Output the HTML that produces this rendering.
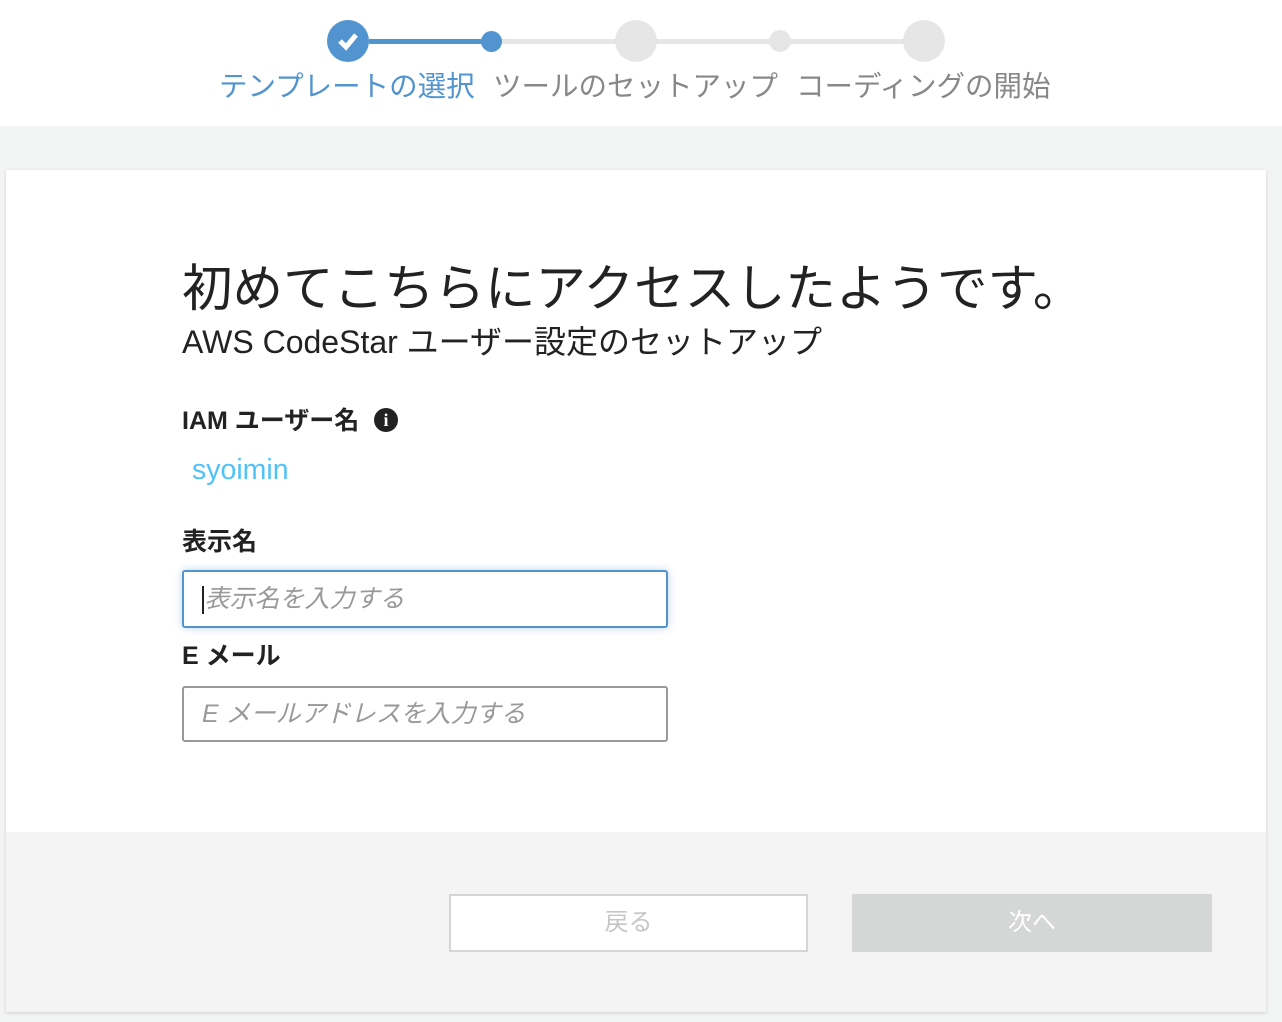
<!DOCTYPE html>
<html><head><meta charset="utf-8"><style>
*{margin:0;padding:0;box-sizing:border-box}
body{width:1282px;height:1022px;background:#f2f3f3;font-family:"Liberation Sans","Noto Sans CJK JP",sans-serif;position:relative;overflow:hidden;color:#222}
.a{position:absolute;white-space:nowrap}
.top{position:absolute;left:0;top:0;width:1282px;height:126px;background:#fff}
.c{position:absolute;border-radius:50%}
.card{position:absolute;left:6px;top:170px;width:1260px;height:842px;background:#fff;box-shadow:0 1px 3px rgba(0,0,0,.15)}
.foot{position:absolute;left:6px;top:832px;width:1260px;height:180px;background:#f4f4f4}
.inp{position:absolute;left:182px;width:486px;border-radius:3px;background:#fff;font-style:italic;color:#999;font-size:25px;padding-left:18px}
</style></head><body>
<div class="top"></div>
<div class="a" style="left:369px;top:39px;width:122px;height:5px;background:#5294cf"></div>
<div class="a" style="left:491px;top:39px;width:433px;height:5px;background:#e6e6e6"></div>
<div class="c" style="left:327px;top:20px;width:42px;height:42px;background:#5294cf"></div>
<svg class="a" style="left:333px;top:27px" width="30" height="28"><path d="M7 14 L13 20 L23 8" stroke="#fff" stroke-width="5" fill="none"/></svg>
<div class="c" style="left:481px;top:31px;width:21px;height:21px;background:#5294cf"></div>
<div class="c" style="left:615px;top:20px;width:42px;height:42px;background:#e6e6e6"></div>
<div class="c" style="left:769px;top:30px;width:22px;height:22px;background:#e6e6e6"></div>
<div class="c" style="left:903px;top:20px;width:42px;height:42px;background:#e6e6e6"></div>
<div class="a" style="left:219px;top:64px;font-size:28.5px;color:#5294cf">テンプレートの選択</div>
<div class="a" style="left:493px;top:64px;font-size:28.5px;color:#888">ツールのセットアップ</div>
<div class="a" style="left:796px;top:64px;font-size:28.5px;color:#888">コーディングの開始</div>
<div class="card"></div>
<div class="foot"></div>
<div class="a" style="left:182px;top:247px;font-size:50.5px;color:#222">初めてこちらにアクセスしたようです。</div>
<div class="a" style="left:182px;top:317px;font-size:32px;color:#222">AWS CodeStar ユーザー設定のセットアップ</div>
<div class="a" style="left:182px;top:401px;font-size:25px;font-weight:bold;color:#222">IAM ユーザー名</div>
<div class="c" style="left:374px;top:408px;width:24px;height:24px;background:#222;color:#fff;font-weight:bold;font-size:18px;text-align:center;line-height:24px;font-family:'Liberation Serif',serif">i</div>
<div class="a" style="left:192px;top:454px;font-size:28.5px;color:#4fc3f7">syoimin</div>
<div class="a" style="left:182px;top:522px;font-size:25px;font-weight:bold;color:#222">表示名</div>
<div class="inp" style="top:570px;height:58px;border:2px solid #5294cf;box-shadow:0 0 8px rgba(82,148,207,.4);line-height:54px"><span style="display:inline-block;width:1.5px;height:28px;background:#222;vertical-align:middle;margin-right:1px"></span>表示名を入力する</div>
<div class="a" style="left:182px;top:636px;font-size:25px;font-weight:bold;color:#222">E メール</div>
<div class="inp" style="top:686px;height:56px;border:2px solid #999;line-height:52px">E メールアドレスを入力する</div>
<div class="a" style="left:449px;top:894px;width:359px;height:58px;border:2px solid #d5d5d5;color:#c6c6c6;font-size:24px;text-align:center;line-height:54px;background:#fff">戻る</div>
<div class="a" style="left:852px;top:894px;width:360px;height:58px;background:#d5d6d6;color:#fff;font-size:24px;text-align:center;line-height:58px">次へ</div>
</body></html>
